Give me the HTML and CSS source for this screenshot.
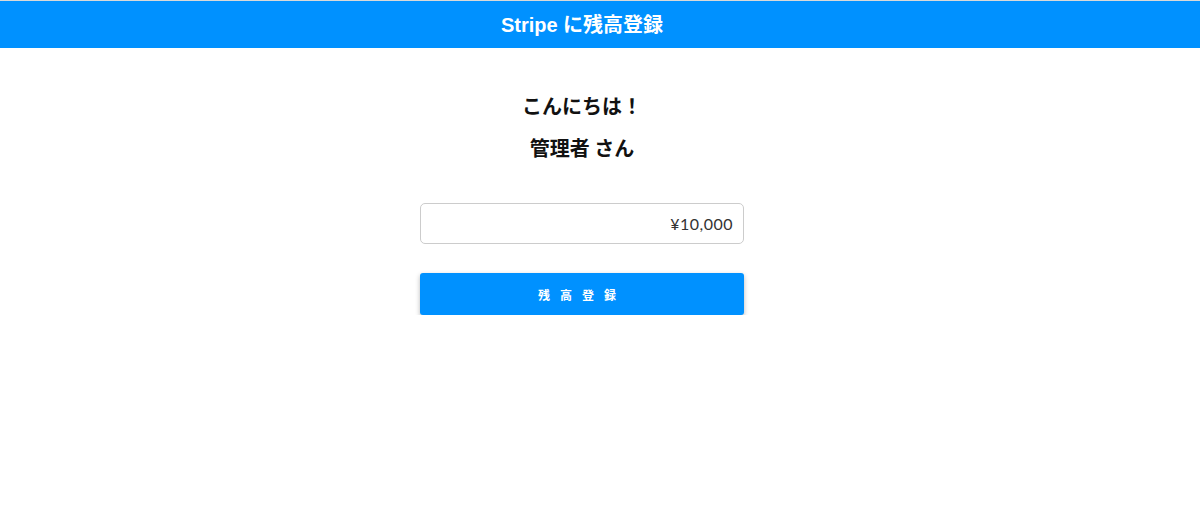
FILE: index.html
```html
<!DOCTYPE html>
<html lang="ja">
    <head>
        <meta charset="utf-8" />
        <title>Stripe に残高登録</title>
        <link rel="stylesheet" href="styles.css">
    </head>
    <body>
        <div id="header">
            <h1 class="title">Stripe に残高登録</h1>
        </div>
        <div id="main">
            <div class="panel">
                <h2 class="greeting">こんにちは！</h2>
                <h2 class="greeting user">管理者 さん</h2>
                <input type="text" class="amount" value="¥10,000">
                <a class="btn" id="btnRegister">残高登録</a>
            </div>
        </div>
    </body>
</html>
```
FILE: styles.css
```css
/* body props */
body {
    margin:             0;
    background-color:   #FFFFFF;
    font-family:        "Liberation Sans", "Noto Sans CJK JP", sans-serif;
    color:              #111111;
}
#header {
    border-top:         1px solid #D9D9D9;
    background-color:   #0091FF;
    height:             47px;
    display:            flex;
    align-items:        center;
    justify-content:    center;
    padding-right:      36px;
}
#header .title {
    margin:             0;
    color:              #FFFFFF;
    font-size:          20px;
    font-weight:        bold;
    line-height:        1;
}
#main {
    display:            flex;
    justify-content:    center;
    padding-right:      36px;
}
.panel {
    width:              324px;
    display:            flex;
    flex-direction:     column;
    align-items:        center;
    padding-top:        44px;
}
.greeting {
    margin:             0;
    font-family:        "Noto Sans CJK JP", sans-serif;
    font-size:          20px;
    font-weight:        bold;
    line-height:        28px;
}
.greeting.user {
    margin-top:         14px;
}
.amount {
    box-sizing:         border-box;
    width:              100%;
    height:             41px;
    margin-top:         41px;
    padding:            0 10px;
    border:             1px solid #CCCCCC;
    border-radius:      5px;
    text-align:         right;
    font-family:        Lato, "Noto Sans CJK JP", sans-serif;
    font-size:          16px;
    letter-spacing:     .5px;
    color:              #333333;
    outline:            none;
}
a.btn {
    box-sizing:         border-box;
    width:              100%;
    height:             42px;
    margin-top:         29px;
    display:            flex;
    align-items:        center;
    justify-content:    center;
    background-color:   #0091FF;
    border-radius:      3px;
    box-shadow:         0 2px 5px rgba(0, 0, 0, .28);
    color:              #FFFFFF;
    font-family:        "Noto Sans CJK JP", sans-serif;
    font-size:          12px;
    font-weight:        bold;
    letter-spacing:     10px;
    text-decoration:    none;
    cursor:             pointer;
}
```
